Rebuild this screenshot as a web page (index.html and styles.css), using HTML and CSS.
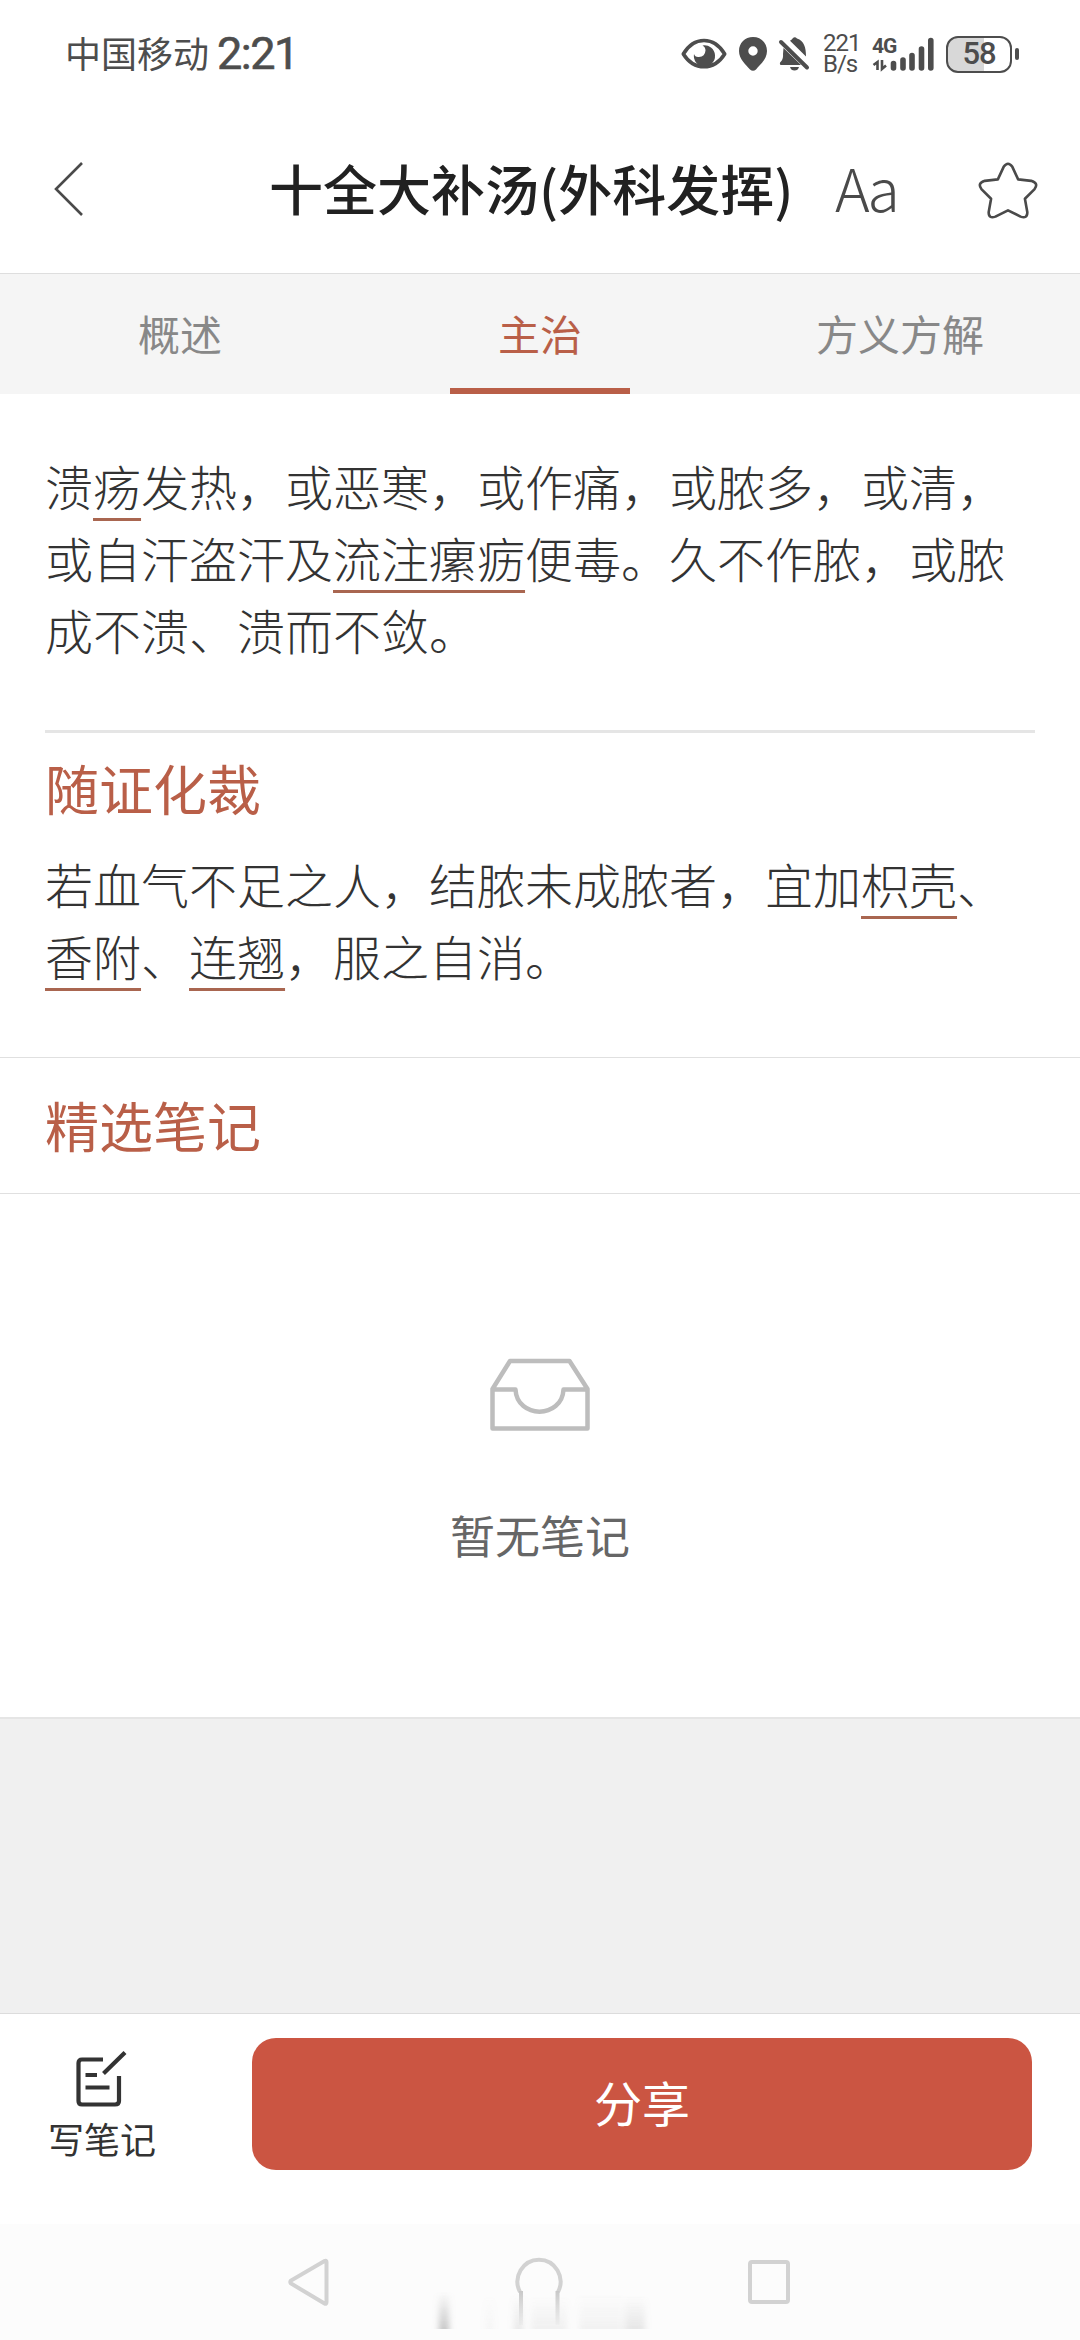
FILE: index.html
```html
<!DOCTYPE html>
<html lang="zh-CN">
<head>
<meta charset="utf-8">
<title>十全大补汤(外科发挥)</title>
<link rel="stylesheet" href="styles.css">
</head>
<body>
<header class="status">
  <div class="status-left"><span class="carrier">中国移动</span><span class="clock">2:21</span></div>
  <div class="status-right">
    <svg class="i-eye" width="46" height="32" viewBox="0 0 46 32"><path d="M2.3 16C13-2 33-2 43.700 16C33 33 13 33 2.300 16Z" fill="none" stroke="#4d4d4d" stroke-width="3.600" stroke-linejoin="round"/><path d="M21.500 7.500A10.600 10.600 0 1 1 13 16Q14 19.500 18 19Q24 18.500 24.500 12.500Q24.500 9 21.500 7.500Z" fill="#4d4d4d"/></svg>
    <svg class="i-pin" width="28" height="34" viewBox="0 0 28 34"><path fill-rule="evenodd" d="M14 0C22 0 28 6 28 14C28 22 21 28 17 32.500Q14 35 11 32.500C7 28 0 22 0 14C0 6 6 0 14 0ZM14 9.300A4.700 4.700 0 1 0 14 18.700A4.700 4.700 0 1 0 14 9.300Z" fill="#4d4d4d"/></svg>
    <svg class="i-bell" width="30" height="34" viewBox="0 0 30 34"><path d="M2 5L28 30.500" stroke="#4d4d4d" stroke-width="4" stroke-linecap="round"/><path d="M4.500 11L22 28H1.500Q0 26 2 24.500Q4.500 22 4 17ZM11 3.800Q13 2.500 14 1Q16-.5 18 1.500C25 4 27 10 27 19.500ZM11 30H20Q19 33.500 15.500 33.500T11 30Z" fill="#4d4d4d"/></svg>
    <span class="speed"><span>221</span><span>B/s</span></span>
    <span class="signal">
      <span class="gen">4G</span>
      <svg width="62" height="35" viewBox="0 0 62 35"><g stroke="#4d4d4d" stroke-width="5.600" stroke-linecap="round"><path d="M21.500 26.500V31M31 23V31M40 18.500V31M49.500 12V31M58.800 3.500V31"/></g><path d="M5.500 33V25L1.500 28M10 23V32L14 28.500" fill="none" stroke="#4d4d4d" stroke-width="2.600"/></svg>
    </span>
    <span class="battery"><span class="level">58</span></span><span class="cap"></span>
  </div>
</header>
<nav class="topbar">
  <svg class="back" width="30" height="56" viewBox="0 0 30 56"><path d="M28 2L2 28L28 54" fill="none" stroke="#4a4a4a" stroke-width="2.600"/></svg>
  <h1 class="title">十全大补汤(外科发挥)</h1>
  <span class="fontsize">Aa</span>
  <svg class="star" width="60" height="58" viewBox="0 0 62 60"><path d="M26.500 5Q31-1.500 35.500 5L41.500 18L55 19.500Q63 22 58.500 28L48.500 38L51 52Q51 59 44 56.500L31 50L18 56.500Q11 59 11 52L13.500 38L3.500 28Q-1 22 7 19.500L20.500 18Z" fill="none" stroke="#4a4a4a" stroke-width="2.700" stroke-linejoin="round"/></svg>
</nav>
<div class="tabs"><span class="tab">概述</span><span class="tab active">主治</span><span class="tab">方义方解</span></div>
<main>
  <section class="article">
    <p class="para">溃<a class="term">疡</a>发热，或恶寒，或作痛，或脓多，或清，或自汗盗汗及<a class="term">流注瘰疬</a>便毒。久不作脓，或脓成不溃、溃而不敛。</p>
    <h2 class="heading sub">随证化裁</h2>
    <p class="para">若血气不足之人，结脓未成脓者，宜加<a class="term">枳壳</a>、<a class="term">香附</a>、<a class="term">连翘</a>，服之自消。</p>
  </section>
  <h2 class="heading notes">精选笔记</h2>
  <section class="empty">
    <svg width="100" height="74" viewBox="0 0 100 74"><path d="M20 3H79.500L97.500 31V70.500H2.500V31ZM2.500 31.500H25.500C27 61 72 61 73.500 31.500H97.500" fill="none" stroke="#bdbdbd" stroke-width="4.500" stroke-linejoin="round"/></svg>
    <p class="empty-text">暂无笔记</p>
  </section>
</main>
<footer class="actions">
  <div class="write">
    <svg width="52" height="58" viewBox="0 0 52 58"><g fill="none" stroke="#333" stroke-width="4.200"><path d="M27 9.500H6Q2.500 9.500 2.500 13V51Q2.500 54.500 6 54.500H39Q43 54.500 43 51V26M27.500 23.500L49 2.500M9.500 25H21M9.500 37.500H33.500"/></g></svg>
    <span>写笔记</span>
  </div>
  <button class="share">分享</button>
</footer>
<div class="sysnav">
  <svg width="42" height="48" viewBox="0 0 42 48"><path d="M38.500 4Q38.500 2 36.500 3L3 22.500Q1.500 24 3 25.500L36.500 45.500Q38.500 46.500 38.500 44Z" fill="none" stroke="#d2d2d2" stroke-width="4"/></svg>
  <svg width="240" height="80" viewBox="0 0 240 80">
    <defs>
      <linearGradient id="fade" x1="0" y1="0" x2="0" y2="1"><stop offset="0" stop-color="#999" stop-opacity="0"/><stop offset="1" stop-color="#999" stop-opacity="1"/></linearGradient>
      <linearGradient id="leg" x1="0" y1="0" x2="0" y2="1"><stop offset="0" stop-color="#c8c8c8"/><stop offset="1" stop-color="#c8c8c8" stop-opacity=".1"/></linearGradient>
      <filter id="soft" x="-1" width="3" y="0" height="1"><feGaussianBlur stdDeviation="3 0"/></filter>
    </defs>
    <g fill="url(#fade)" filter="url(#soft)"><rect x="20" y="34" width="10" height="37" opacity=".55"/><rect x="67" y="38" width="7" height="33" opacity=".08"/><rect x="95" y="36" width="9" height="35" opacity=".2"/><rect x="112" y="38" width="36" height="33" opacity=".12"/><rect x="160" y="36" width="44" height="35" opacity=".1"/><rect x="206" y="38" width="20" height="33" opacity=".22"/></g>
    <path d="M101 34A21.500 22 0 1 1 139 34" fill="none" stroke="#d2d2d2" stroke-width="4"/>
    <rect x="100" y="33" width="4" height="34" fill="url(#leg)"/><rect x="136.500" y="33" width="4" height="34" fill="url(#leg)"/>
  </svg>
  <svg width="42" height="44" viewBox="0 0 42 44"><rect x="2" y="2" width="38" height="40" rx="2" fill="none" stroke="#d2d2d2" stroke-width="4"/></svg>
</div>
</body>
</html>
```
FILE: styles.css
```css
* { box-sizing: border-box; }
body { margin: 0; width: 1080px; height: 2340px; display: flex; flex-direction: column; background: #f0f0f0; color: #333; font-family: "Noto Sans CJK SC", "Noto Sans", sans-serif; }
h1, h2, p { margin: 0; }
svg { display: block; flex: none; overflow: visible; }
.status { height: 108px; display: flex; justify-content: space-between; padding: 0 61px 0 65px; color: #4d4d4d; background: #fff; }
.status-left, .status-right { display: flex; align-items: center; }
.carrier { font-size: 36px; line-height: 104px; height: 108px; }
.clock { font: 400 45px/108px Roboto, sans-serif; margin-left: 8px; letter-spacing: -1.500px; -webkit-text-stroke: 0.600px #4d4d4d; }
.i-eye { margin-right: 12px; }
.i-pin { margin-right: 12px; }
.i-bell { margin-right: 14px; }
.speed { display: flex; flex-direction: column; width: 36px; margin-right: 13px; font: 400 24px/21px Roboto, sans-serif; letter-spacing: -1px; }
.signal { position: relative; margin-right: 12px; }
.gen { position: absolute; left: 0; top: -1px; font: 700 21px/20px Roboto, sans-serif; letter-spacing: -1px; }
.battery { width: 66px; height: 37px; border: 2.500px solid #4d4d4d; border-radius: 12px; background: linear-gradient(90deg, #d8d8d8 58%, #fff 58%); display: flex; align-items: center; justify-content: center; font: 500 31px/32px Roboto, sans-serif; letter-spacing: -1px; }
.cap { width: 4px; height: 12px; border-radius: 2px; background: #4d4d4d; margin-left: 3px; }
.topbar { height: 165px; display: flex; align-items: center; padding: 0 42px 3px 54px; background: #fff; }
.title { margin-left: 185px; width: 524px; font-size: 54px; font-weight: 500; line-height: 80px; color: #212121; white-space: nowrap; padding-bottom: 2px; }
.fontsize { margin-left: 42px; width: 66px; font-size: 59px; font-weight: 300; line-height: 80px; letter-spacing: -4px; color: #4a4a4a; padding-bottom: 5px; }
.star { margin-left: auto; margin-top: 3px; }
.tabs { height: 121px; display: grid; grid-template-columns: repeat(3, 1fr); background: #f5f5f5; border-top: 1px solid #dedede; }
.tab { display: flex; justify-content: center; font-size: 42px; line-height: 117px; color: #888; height: 120px; }
.tab.active { justify-self: center; width: 180px; color: #b95f48; border-bottom: 6px solid #b95f48; }
main { height: 1325px; background: #fff; border-bottom: 2px solid #e5e5e5; }
.article { height: 664px; padding: 55px 45px 0; border-bottom: 1px solid #e0e0e0; }
.para { font-size: 48px; line-height: 72px; font-weight: 300; }
.term { text-decoration: underline #a96650 3px; text-underline-offset: 12px; text-decoration-skip-ink: none; }
.heading { font-size: 54px; font-weight: 400; color: #b95f48; }
.sub { margin-top: 65px; border-top: 3px solid #e5e5e5; line-height: 109px; height: 117px; }
.notes { height: 136px; line-height: 133px; padding-left: 45px; border-bottom: 1px solid #e0e0e0; }
.empty { display: flex; flex-direction: column; align-items: center; padding-top: 164px; }
.empty-text { margin-top: 69px; font-size: 45px; line-height: 68px; color: #666; }
.actions { margin-top: auto; height: 211px; border-top: 1px solid #dcdcdc; background: #fff; display: flex; padding: 24px 48px 0 0; }
.write { width: 204px; display: flex; flex-direction: column; align-items: center; padding-top: 12px; font-size: 36px; line-height: 54px; gap: 3px; }
.write span { height: 54px; }
.share { margin-left: 48px; width: 780px; height: 132px; border: 0; border-radius: 24px; background: #cb5542; color: #fff; font: 400 48px/72px "Noto Sans CJK SC", sans-serif; padding: 0 0 6px; }
.sysnav { height: 116px; background: #fcfcfc; display: flex; align-items: flex-start; padding: 34px 290px 0 288px; justify-content: space-between; }
.sysnav svg:last-child { margin-top: 2px; }
```
